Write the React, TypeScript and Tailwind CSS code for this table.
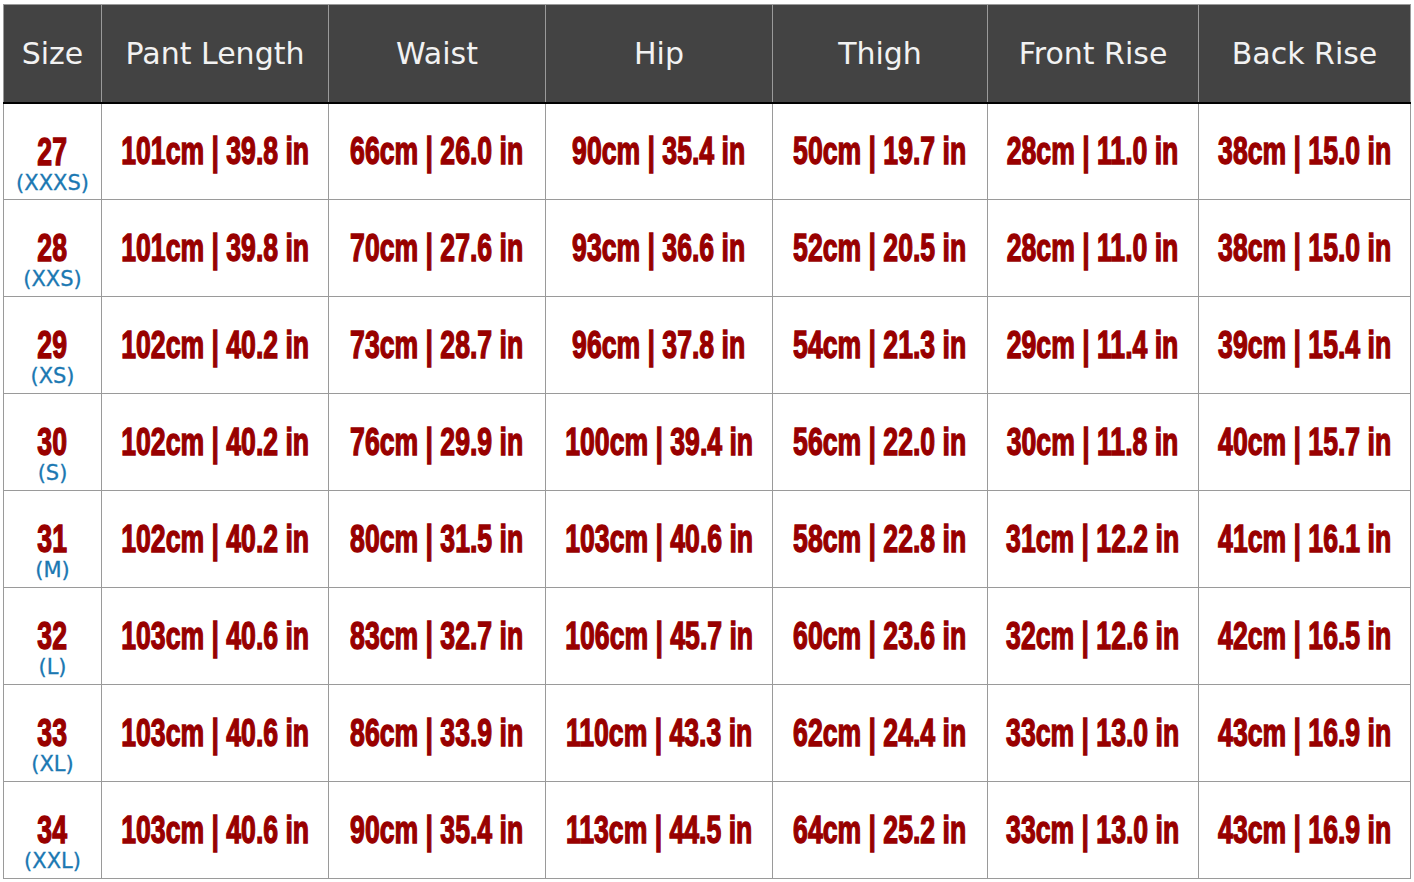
const headers = ['Size', 'Pant Length', 'Waist', 'Hip', 'Thigh', 'Front Rise', 'Back Rise'];
const widths = ['w-[98px]', 'w-[227px]', 'w-[217px]', 'w-[227px]', 'w-[215px]', 'w-[211px]', 'w-[212px]'];

const rows = [
  ['27', '(XXXS)', '101cm | 39.8 in', '66cm | 26.0 in', '90cm | 35.4 in', '50cm | 19.7 in', '28cm | 11.0 in', '38cm | 15.0 in'],
  ['28', '(XXS)', '101cm | 39.8 in', '70cm | 27.6 in', '93cm | 36.6 in', '52cm | 20.5 in', '28cm | 11.0 in', '38cm | 15.0 in'],
  ['29', '(XS)', '102cm | 40.2 in', '73cm | 28.7 in', '96cm | 37.8 in', '54cm | 21.3 in', '29cm | 11.4 in', '39cm | 15.4 in'],
  ['30', '(S)', '102cm | 40.2 in', '76cm | 29.9 in', '100cm | 39.4 in', '56cm | 22.0 in', '30cm | 11.8 in', '40cm | 15.7 in'],
  ['31', '(M)', '102cm | 40.2 in', '80cm | 31.5 in', '103cm | 40.6 in', '58cm | 22.8 in', '31cm | 12.2 in', '41cm | 16.1 in'],
  ['32', '(L)', '103cm | 40.6 in', '83cm | 32.7 in', '106cm | 45.7 in', '60cm | 23.6 in', '32cm | 12.6 in', '42cm | 16.5 in'],
  ['33', '(XL)', '103cm | 40.6 in', '86cm | 33.9 in', '110cm | 43.3 in', '62cm | 24.4 in', '33cm | 13.0 in', '43cm | 16.9 in'],
  ['34', '(XXL)', '103cm | 40.6 in', '90cm | 35.4 in', '113cm | 44.5 in', '64cm | 25.2 in', '33cm | 13.0 in', '43cm | 16.9 in'],
];

// Impact-like: heavy Liberation Sans squeezed horizontally
const impact =
  "inline-block whitespace-nowrap scale-x-[0.7] font-['Liberation_Sans',sans-serif] font-bold text-[#980000] [-webkit-text-stroke:1.4px_#980000]";

export default function App() {
  return (
    <div className="min-h-screen bg-white pt-[4px] pl-[3px]">
      <table className="table-fixed border-collapse w-[1408px]">
        <colgroup>
          {widths.map((w, i) => (
            <col key={i} className={w} />
          ))}
        </colgroup>
        <thead>
          <tr className="h-[98px] bg-[#434343]">
            {headers.map((h) => (
              <th
                key={h}
                className="border border-[#9a9a9a] border-b-2 border-b-black p-0 text-center align-middle font-['DejaVu_Sans',sans-serif] text-[30px] font-normal text-[#f2f2f2]"
              >
                {h}
              </th>
            ))}
          </tr>
        </thead>
        <tbody>
          {rows.map((r) => (
            <tr key={r[0]} className="h-[97px]">
              <td className="border border-[#9a9a9a] p-0 text-center align-top">
                <div className="flex flex-col items-center pt-[28px]">
                  <span className={`${impact} text-[38px] leading-[40px]`}>{r[0]}</span>
                  <span className="whitespace-nowrap font-['DejaVu_Sans',sans-serif] text-[21px] leading-[22px] text-[#1b78b2] [-webkit-text-stroke:0.3px_#1b78b2]">
                    {r[1]}
                  </span>
                </div>
              </td>
              {r.slice(2).map((v, i) => (
                <td key={i} className="border border-[#9a9a9a] p-0 text-center align-middle">
                  <div className="flex justify-center">
                    <span className={`${impact} text-[38px] leading-none`}>{v}</span>
                  </div>
                </td>
              ))}
            </tr>
          ))}
        </tbody>
      </table>
    </div>
  );
}
